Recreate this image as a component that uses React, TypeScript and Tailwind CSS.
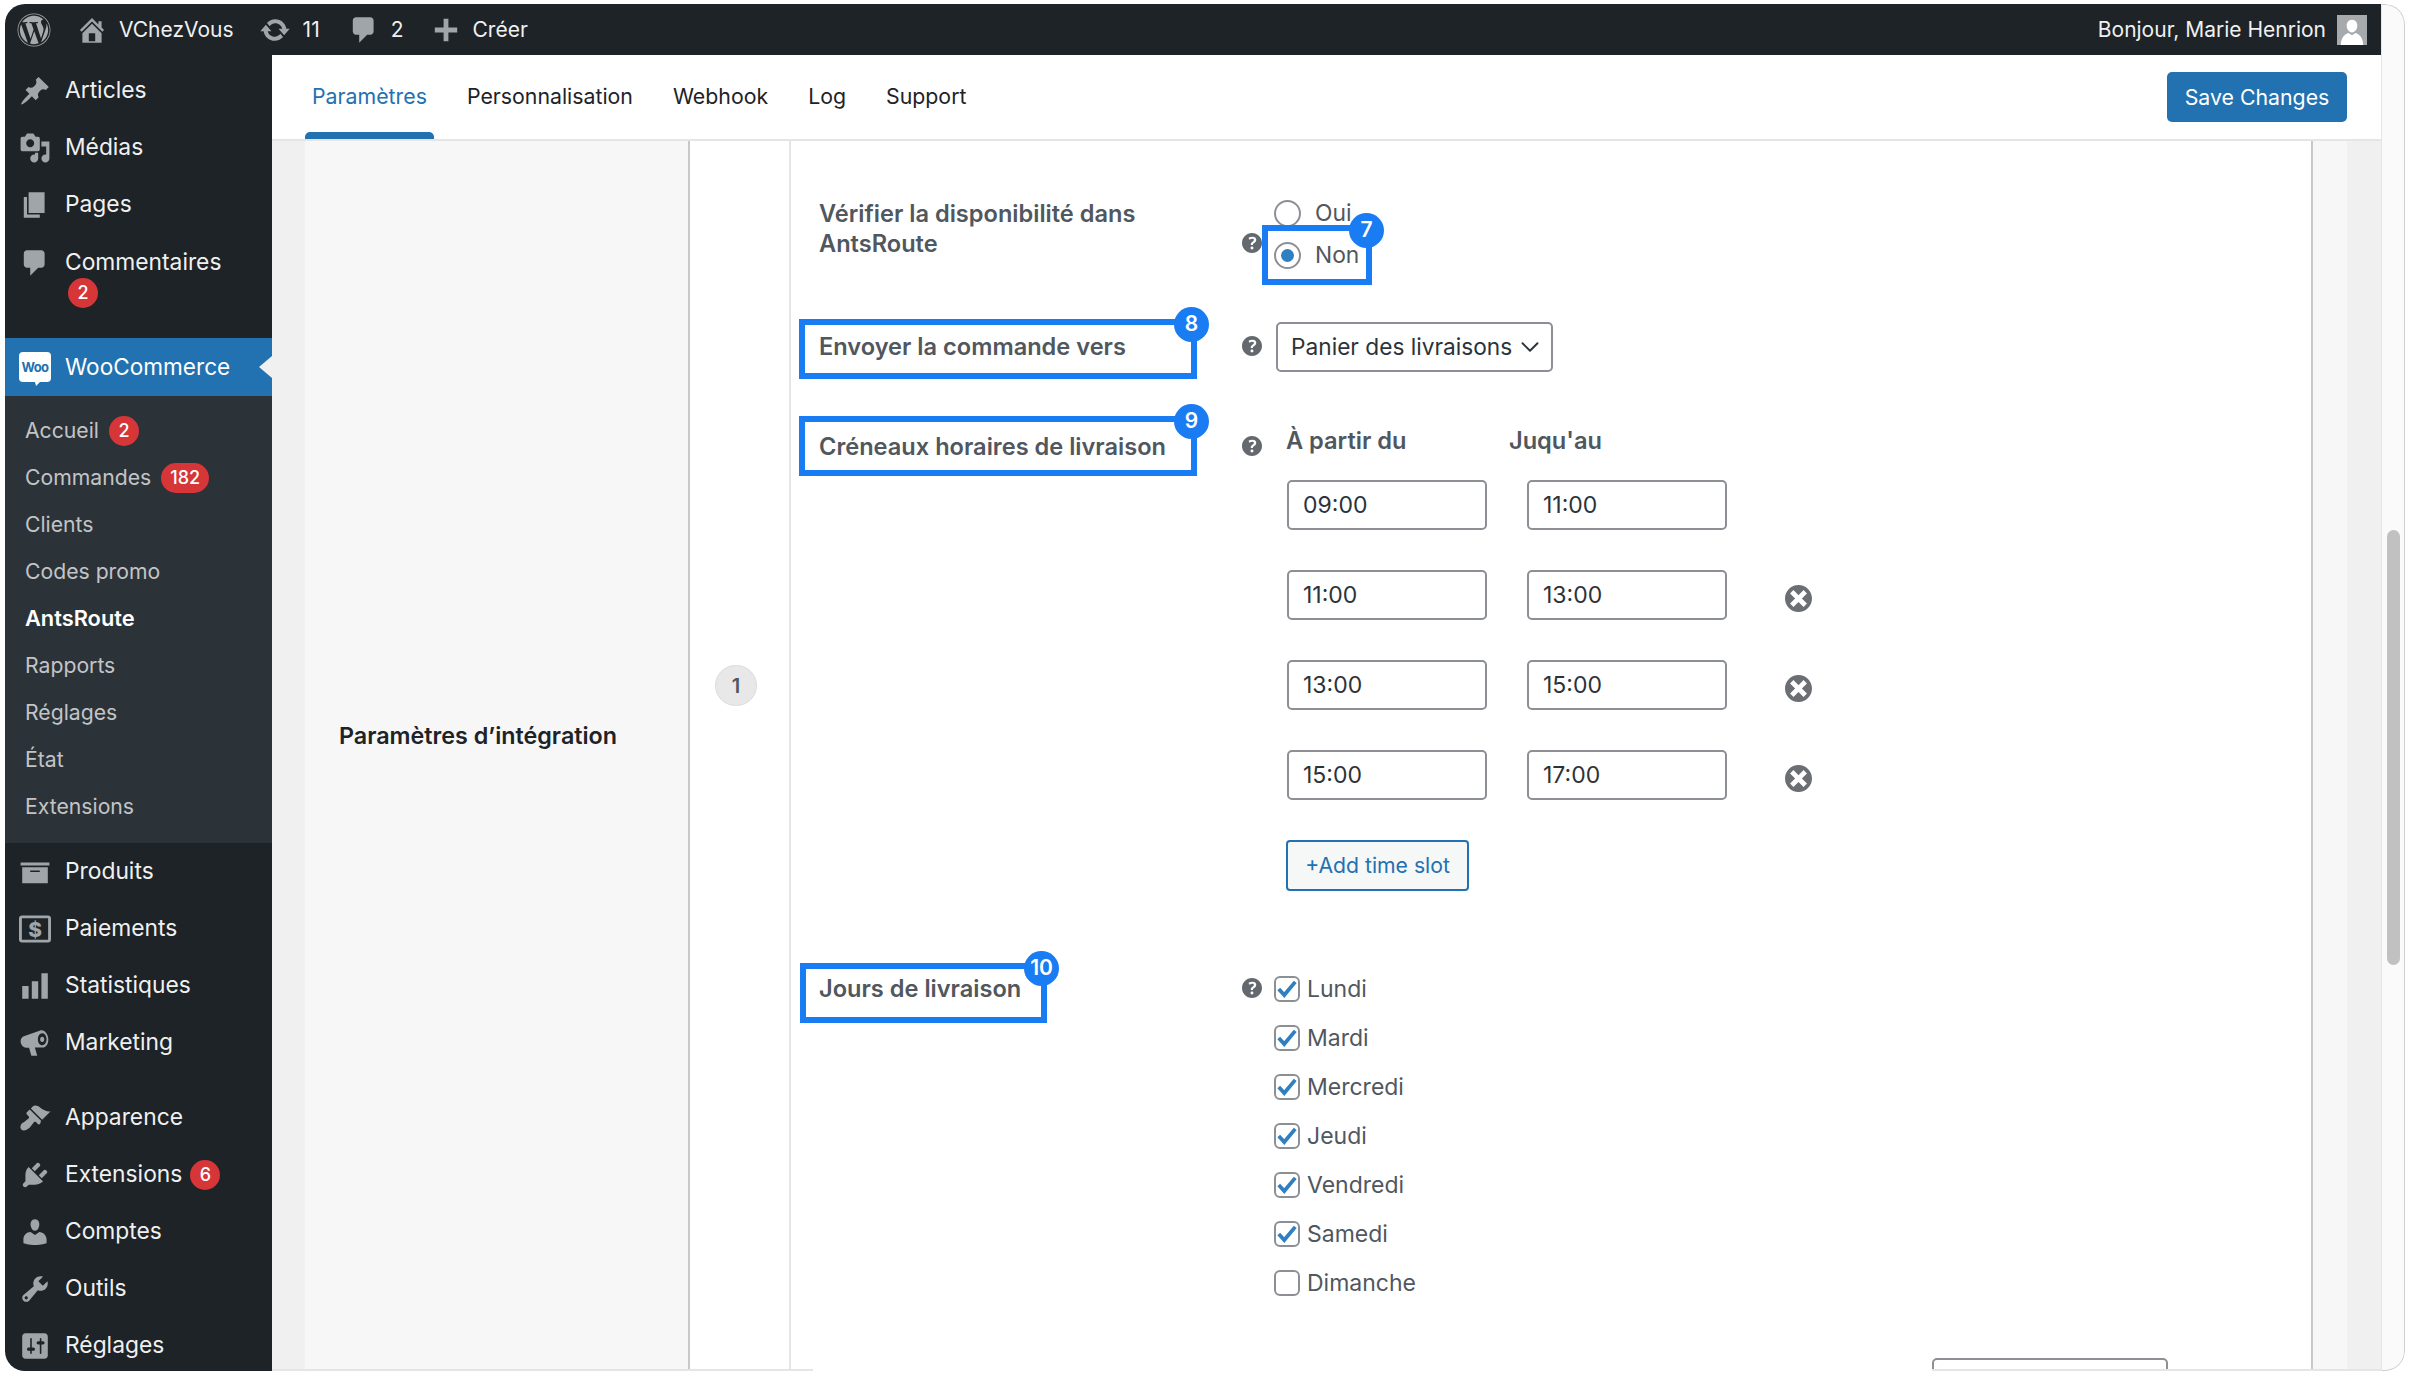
import { ChevronDown } from 'lucide-react'
import { FaWordpress } from 'react-icons/fa'
import type { ReactNode } from 'react'

// dashicons paths, 20x20 grid
const icons = {
  post: 'M10.44 3.02l1.82-1.82 6.36 6.35-1.83 1.82c-1.05-.68-2.48-.57-3.41.36l-.75.75c-.92.93-1.04 2.35-.35 3.41l-1.83 1.82-2.41-2.41-2.8 2.79c-.42.42-3.38 2.71-3.8 2.29s1.86-3.39 2.28-3.81l2.79-2.79L4.1 9.36l1.83-1.82c1.05.69 2.48.57 3.4-.36l.75-.75c.93-.92 1.05-2.35.36-3.41z',
  media: 'M13 11V4c0-.55-.45-1-1-1h-1.67L9 1H5L3.67 3H2c-.55 0-1 .45-1 1v7c0 .55.45 1 1 1h10c.55 0 1-.45 1-1zM7 4.5c1.38 0 2.5 1.12 2.5 2.5S8.38 9.5 7 9.5 4.5 8.38 4.5 7 5.62 4.5 7 4.5zM14 6h5v10.5c0 1.38-1.12 2.5-2.5 2.5S14 17.88 14 16.5s1.12-2.5 2.5-2.5c.17 0 .34.02.5.05V9h-3V6zm-4 8.05V13h2v3.5c0 1.38-1.12 2.5-2.5 2.5S7 17.88 7 16.5 8.12 14 9.5 14c.17 0 .34.02.5.05z',
  page: 'M6 15V2h10v13H6zm-1 1h8v2H3V5h2v11z',
  comments: 'M5 2h9c1.1 0 2 .9 2 2v7c0 1.1-.9 2-2 2h-2l-5 5v-5H5c-1.1 0-2-.9-2-2V4c0-1.1.9-2 2-2z',
  home: 'M16 8.5l1.53 1.53-1.06 1.06L10 4.62l-6.47 6.47-1.06-1.06L10 2.5l4 4v-2h2v4zm-6-2.46l6 5.99V18H4v-5.97zM12 17v-5H8v5h4z',
  update: 'M10.2 3.28c3.53 0 6.43 2.61 6.92 6h2.08l-3.5 4-3.5-4h2.32c-.45-1.97-2.21-3.45-4.32-3.45-1.45 0-2.73.71-3.54 1.78L4.95 5.66C6.23 4.2 8.11 3.28 10.2 3.28zm-.4 13.44c-3.52 0-6.43-2.61-6.92-6H.8l3.5-4c1.17 1.33 2.33 2.67 3.5 4H5.48c.45 1.97 2.21 3.45 4.32 3.45 1.45 0 2.73-.71 3.54-1.78l1.71 1.95c-1.28 1.46-3.15 2.38-5.25 2.38z',
  plus: 'M17 8.5v3h-5.5V17h-3v-5.5H3v-3h5.5V3h3v5.5H17z',
  archive: 'M19 4v2H1V4h18zM2 7h16v10H2V7zm11 3V9H7v1h6z',
  chart: 'M18 18V2h-4v16h4zm-6 0V7H8v11h4zm-6 0v-8H2v8h4z',
  megaphone: 'M13.2 2.2c2.4-.7 4.5 1.6 5 4.4.5 2.8-.4 5.6-2.8 6.2H9.9l1.5 5.2h-3.7L6.3 13H4.6C2.6 12.9 1 10.9 1 8.9c0-1.4.8-2.6 2-3.1l9.4-3.3c.3-.1.5-.2.8-.3zm1.3 1.7c-1.6 0-2.7 1.8-2.7 3.9s1.1 3.6 2.7 3.6 2.7-1.6 2.7-3.7-1.1-3.8-2.7-3.8zm0 2.2c.8 0 1.3.8 1.3 1.7s-.5 1.6-1.3 1.6-1.3-.7-1.3-1.6.5-1.7 1.3-1.7z',
  appearance: 'M14.48 11.06L7.41 3.99l1.5-1.5c.5-.56 2.3-.47 3.51.32 1.21.8 1.43 1.28 2.91 2.1 1.18.64 2.45 1.26 4.45.85zm-.71.71L6.7 4.7 4.93 6.47c-.39.39-.39 1.02 0 1.41l1.06 1.06c.39.39.39 1.03 0 1.42-.6.6-1.43 1.11-2.21 1.69-.35.26-.7.53-1.01.84C1.43 13.23.1 15.8 1.48 17.18c1.37 1.37 3.95.04 5.31-1.29.31-.31.58-.66.84-1.01.58-.78 1.09-1.61 1.69-2.21.39-.39 1.02-.39 1.41 0l1.06 1.06c.39.39 1.02.39 1.41 0z',
  plugins: 'M13.11 4.36L9.87 7.6 8 5.73l3.24-3.24c.35-.34 1.05-.2 1.56.32.52.51.66 1.21.31 1.55zm-8 1.77l.91-1.12 9.01 9.01-1.19.84c-.71.71-2.63 1.16-3.82 1.16H6.14L4.9 17.26c-.59.59-1.54.59-2.12 0-.59-.58-.59-1.53 0-2.12l1.24-1.24v-3.88c0-1.13.4-3.19 1.09-3.89zm7.26 3.97l3.24-3.24c.34-.35 1.04-.21 1.55.31.52.51.66 1.21.31 1.55l-3.24 3.25z',
  users: 'M10 9.25c-2.27 0-2.73-3.44-2.73-3.44C7 4.02 7.82 2 9.97 2c2.16 0 2.98 2.02 2.71 3.81 0 0-.41 3.44-2.68 3.44zm0 2.57L12.72 10c2.39 0 4.52 2.33 4.52 4.53v2.49s-3.65 1.13-7.24 1.13c-3.65 0-7.24-1.13-7.24-1.13v-2.49c0-2.25 1.94-4.48 4.47-4.48z',
  tools: 'M16.68 9.77c-1.34 1.34-3.3 1.67-4.95.99l-5.41 6.52c-.99.99-2.59.99-3.58 0s-.99-2.59 0-3.57l6.52-5.42c-.68-1.65-.35-3.61.99-4.95 1.28-1.28 3.12-1.62 4.72-1.06l-2.89 2.89 2.82 2.82 2.86-2.87c.53 1.58.18 3.39-1.08 4.65zM3.81 16.21c.4.39 1.04.39 1.43 0 .4-.4.4-1.04 0-1.43-.39-.4-1.03-.4-1.43 0-.39.39-.39 1.03 0 1.43z',
  settings: 'M18 16V4c0-1.1-.9-2-2-2H4c-1.1 0-2 .9-2 2v12c0 1.1.9 2 2 2h12c1.1 0 2-.9 2-2zM8 11h1c.55 0 1 .45 1 1s-.45 1-1 1H8v1.5c0 .28-.22.5-.5.5s-.5-.22-.5-.5V13H6c-.55 0-1-.45-1-1s.45-1 1-1h1V5.5c0-.28.22-.5.5-.5s.5.22.5.5V11zm5-2h-1c-.55 0-1-.45-1-1s.45-1 1-1h1V5.5c0-.28.22-.5.5-.5s.5.22.5.5V7h1c.55 0 1 .45 1 1s-.45 1-1 1h-1v5.5c0 .28-.22.5-.5.5s-.5-.22-.5-.5V9z',
  help: 'M17 10c0-3.87-3.14-7-7-7-3.87 0-7 3.13-7 7 0 3.86 3.13 7 7 7 3.86 0 7-3.14 7-7zm-6.3 1.48H9.14v-.43c0-.38.08-.7.24-.98s.46-.57.88-.89c.41-.29.68-.53.81-.71.14-.18.2-.39.2-.62 0-.25-.09-.44-.28-.58-.19-.13-.45-.19-.79-.19-.58 0-1.25.19-2 .57l-.64-1.28c.87-.49 1.8-.74 2.77-.74.81 0 1.45.2 1.92.58.48.39.71.91.71 1.55 0 .43-.09.8-.29 1.11-.19.32-.57.67-1.11 1.06-.38.28-.61.49-.71.63-.1.15-.15.34-.15.57v.35zm-1.47 2.74c-.18-.18-.27-.42-.27-.73 0-.33.08-.58.26-.75s.43-.25.77-.25c.32 0 .57.09.75.26s.27.42.27.74c0 .3-.09.55-.27.72-.18.18-.43.27-.75.27-.33 0-.58-.09-.76-.26z',
  dismiss: 'M10 2c4.42 0 8 3.58 8 8s-3.58 8-8 8-8-3.58-8-8 3.58-8 8-8zm5 11l-3-3 3-3-2-2-3 3-3-3-2 2 3 3-3 3 2 2 3-3 3 3z',
}

function Dash({ d, className = 'size-8 fill-[#a0a5aa]' }: { d: string; className?: string }) {
  return (
    <svg viewBox="0 0 20 20" className={className} aria-hidden="true">
      <path d={d} />
    </svg>
  )
}

function PayIcon() {
  return (
    <svg viewBox="0 0 20 20" className="size-8" aria-hidden="true">
      <rect x="0.9" y="2.4" width="18.2" height="15.2" rx="1" fill="none" stroke="#a0a5aa" strokeWidth="1.8" />
      <text x="10" y="14.8" textAnchor="middle" fontSize="13" fontWeight="800" fill="#a0a5aa" fontFamily="Inter, sans-serif">
        $
      </text>
    </svg>
  )
}

function WooIcon() {
  return (
    <svg viewBox="0 0 32 34" className="h-[34px] w-8" aria-hidden="true">
      <path d="M4 0h24a4 4 0 0 1 4 4v22a4 4 0 0 1-4 4H21l-4 4-1-4H4a4 4 0 0 1-4-4V4a4 4 0 0 1 4-4z" fill="#fff" />
      <text x="16" y="20" textAnchor="middle" fontSize="13" fontWeight="700" letterSpacing="-0.6" fill="#2271b1" fontFamily="Inter, sans-serif">
        Woo
      </text>
    </svg>
  )
}

function Count({ children, wide }: { children: ReactNode; wide?: boolean }) {
  return (
    <span className={`flex h-[30px] items-center justify-center rounded-full bg-[#d63638] text-[18px] font-medium text-white ${wide ? 'w-[48px]' : 'w-[30px]'}`}>
      {children}
    </span>
  )
}

function MenuItem({ icon, label, badge }: { icon: ReactNode; label: string; badge?: string }) {
  return (
    <div className="flex h-[57px] items-center text-[22.8px] text-[#f0f0f1]">
      <span className="flex w-[60px] justify-center">{icon}</span>
      <span>{label}</span>
      {badge && (
        <span className="ml-[8px]">
          <Count>{badge}</Count>
        </span>
      )}
    </div>
  )
}

function SubItem({ label, badge, wide, active }: { label: string; badge?: string; wide?: boolean; active?: boolean }) {
  return (
    <div className={`flex h-[47px] items-center gap-[10px] pl-[20px] ${active ? 'text-[21.8px] font-semibold text-white' : 'text-[21.2px] text-[#c3c4c7]'}`}>
      <span>{label}</span>
      {badge && <Count wide={wide}>{badge}</Count>}
    </div>
  )
}

function Sidebar() {
  return (
    <aside className="w-[267px] shrink-0 overflow-hidden bg-[#1d2327] pt-[7px]">
      <MenuItem icon={<Dash d={icons.post} />} label="Articles" />
      <MenuItem icon={<Dash d={icons.media} />} label="Médias" />
      <MenuItem icon={<Dash d={icons.page} />} label="Pages" />
      <div className="flex h-[105px] items-start pt-[14px] text-[22.8px] text-[#f0f0f1]">
        <span className="flex w-[60px] justify-center">
          <Dash d={icons.comments} />
        </span>
        <div className="leading-[30px]">
          <div>Commentaires</div>
          <div className="mt-px ml-[3px]">
            <Count>2</Count>
          </div>
        </div>
      </div>
      <div className="relative flex h-[58px] items-center bg-[#2271b1] text-[22.6px] text-white">
        <span className="flex w-[60px] justify-center pt-[3px]">
          <WooIcon />
        </span>
        <span>WooCommerce</span>
        <span className="absolute top-[18px] right-0 size-0 border-y-[11px] border-r-[13px] border-y-transparent border-r-[#f0f0f1]" />
      </div>
      <div className="bg-[#2c3338] pt-[11px] pb-[13px]">
        <SubItem label="Accueil" badge="2" />
        <SubItem label="Commandes" badge="182" wide />
        <SubItem label="Clients" />
        <SubItem label="Codes promo" />
        <SubItem label="AntsRoute" active />
        <SubItem label="Rapports" />
        <SubItem label="Réglages" />
        <SubItem label="État" />
        <SubItem label="Extensions" />
      </div>
      <MenuItem icon={<Dash d={icons.archive} />} label="Produits" />
      <MenuItem icon={<PayIcon />} label="Paiements" />
      <MenuItem icon={<Dash d={icons.chart} />} label="Statistiques" />
      <MenuItem icon={<Dash d={icons.megaphone} />} label="Marketing" />
      <div className="h-[18px]" />
      <MenuItem icon={<Dash d={icons.appearance} />} label="Apparence" />
      <MenuItem icon={<Dash d={icons.plugins} />} label="Extensions" badge="6" />
      <MenuItem icon={<Dash d={icons.users} />} label="Comptes" />
      <MenuItem icon={<Dash d={icons.tools} />} label="Outils" />
      <MenuItem icon={<Dash d={icons.settings} />} label="Réglages" />
    </aside>
  )
}

function AdminBar() {
  return (
    <header className="flex h-[51px] shrink-0 items-center bg-[#1d2327] pr-[14px] pl-[12px] text-[21px] text-[#f0f0f1]">
      <FaWordpress className="size-[34px] text-[#a7aaad]" />
      <span className="ml-[25px]">
        <Dash d={icons.home} />
      </span>
      <span className="ml-[11px]">VChezVous</span>
      <span className="ml-[25px]">
        <Dash d={icons.update} />
      </span>
      <span className="ml-[12px]">11</span>
      <span className="ml-[28px]">
        <Dash d={icons.comments} />
      </span>
      <span className="ml-[11px]">2</span>
      <span className="ml-[26px]">
        <Dash d={icons.plus} />
      </span>
      <span className="ml-[11px]">Créer</span>
      <span className="ml-auto">Bonjour, Marie Henrion</span>
      <span className="ml-[11px] flex h-[30px] w-[30px] items-end justify-center overflow-hidden bg-[#a7aaad]">
        <svg viewBox="0 0 20 20" className="size-[28px] fill-white" aria-hidden="true">
          <path d="M10 2c2.5 0 3.8 2 3.8 4.3S12.3 11 10 11 6.2 8.600 6.200 6.300 7.500 2 10 2zM2 20c0-5 3-8 5.500-8.500L10 13l2.500-1.500C15 12 18 15 18 20z" />
        </svg>
      </span>
    </header>
  )
}

function Tabs() {
  const tabs = ['Paramètres', 'Personnalisation', 'Webhook', 'Log', 'Support']
  return (
    <nav className="flex h-[86px] shrink-0 items-center justify-between border-b-2 border-[#e5e5e5] bg-white pr-[34px] pl-[33px] text-[21.3px]">
      <div className="flex h-full gap-[26px]">
        {tabs.map((tab, index) => (
          <div key={tab} className={`relative flex h-full items-center px-[7px] ${index === 0 ? 'text-[#2271b1]' : 'text-[#1d2327]'}`}>
            {tab}
            {index === 0 && <span className="absolute right-0 bottom-0 left-0 h-[7px] rounded-t-[5px] bg-[#2271b1]" />}
          </div>
        ))}
      </div>
      <button type="button" className="h-[50px] w-[180px] rounded-[5px] bg-[#2271b1] pt-[2px] text-[21.3px] text-white">
        Save Changes
      </button>
    </nav>
  )
}

function Callout({ n, className }: { n: number; className: string }) {
  return (
    <div className={`absolute h-[60px] border-[6px] border-[#1a7cf2] ${className}`}>
      <span className="absolute -top-[18.5px] -right-[18px] flex h-[35px] w-[35px] items-center justify-center rounded-full bg-[#1a7cf2] text-[21px] font-semibold text-white">
        {n}
      </span>
    </div>
  )
}

function Label({ children, className = '' }: { children: ReactNode; className?: string }) {
  return <div className={`relative text-[23.6px] leading-[30px] font-semibold text-[#50575e] ${className}`}>{children}</div>
}

function Help({ className }: { className: string }) {
  return (
    <svg viewBox="3 3 14 14" className={`size-[20px] fill-[#646970] ${className}`} aria-hidden="true">
      <path d={icons.help} />
    </svg>
  )
}

function Radio({ label, checked }: { label: string; checked?: boolean }) {
  return (
    <div className="relative flex h-[28px] items-center text-[22.8px] text-[#50575e]">
      <span className="flex size-[27px] items-center justify-center rounded-full border-2 border-[#8c8f94] bg-white">
        {checked && <span className="size-[13px] rounded-full bg-[#2f7fc1]" />}
      </span>
      <span className="ml-[14px]">{label}</span>
      {checked && <Callout n={7} className="-top-[16px] -left-[12px] w-[110px]" />}
    </div>
  )
}

function TimeInput({ value }: { value: string }) {
  return (
    <div className="flex h-[50px] w-[200px] items-center rounded-[5px] border-2 border-[#8c8f94] bg-white pl-[14px] text-[23px] text-[#2c3338]">
      {value}
    </div>
  )
}

function Day({ label, checked }: { label: string; checked: boolean }) {
  return (
    <div className="flex h-[26px] items-center text-[23px] text-[#50575e]">
      <span className="flex size-[26px] items-center justify-center rounded-[6px] border-2 border-[#8c8f94] bg-white">
        {checked && (
          <svg viewBox="0 0 20 20" className="size-[22px] shrink-0" aria-hidden="true">
            <path d="M2.500 10 7.500 15.500 17.500 3.500" fill="none" stroke="#2f7fc1" strokeWidth="3.4" />
          </svg>
        )}
      </span>
      <span className="ml-[7px]">{label}</span>
    </div>
  )
}

const slots = [
  ['09:00', '11:00'],
  ['11:00', '13:00'],
  ['13:00', '15:00'],
  ['15:00', '17:00'],
]

const days = ['Lundi', 'Mardi', 'Mercredi', 'Jeudi', 'Vendredi', 'Samedi', 'Dimanche']

function Settings() {
  return (
    <div className="grid min-h-0 flex-1 grid-cols-[423px_32px_1fr] content-start overflow-hidden pt-[58px] pl-[28px]">
      <Label>
        Vérifier la disponibilité dans
        <br />
        AntsRoute
      </Label>
      <Help className="mt-[34px]" />
      <div className="flex flex-col gap-[14px]">
        <Radio label="Oui" />
        <Radio label="Non" checked />
      </div>

      <Label className="mt-[63px]">
        <span className="whitespace-nowrap">Envoyer la commande vers</span>
        <Callout n={8} className="-top-[13px] -left-[20px] w-[398px]" />
      </Label>
      <Help className="mt-[67px]" />
      <div className="mt-[53px] ml-[2px] flex h-[50px] w-[277px] items-center justify-between rounded-[5px] border-2 border-[#8c8f94] bg-white pr-[6px] pl-[13px] text-[22.7px] text-[#2c3338]">
        Panier des livraisons
        <ChevronDown className="size-[30px] shrink-0" strokeWidth={1.5} />
      </div>

      <Label className="mt-[60px]">
        <span className="whitespace-nowrap">Créneaux horaires de livraison</span>
        <Callout n={9} className="-top-[16px] -left-[20px] w-[398px]" />
      </Label>
      <Help className="mt-[64px]" />
      <div className="mt-[54px]">
        <div className="ml-[12px] flex text-[23.6px] leading-[30px] font-semibold text-[#50575e]">
          <span className="w-[223px]">À partir du</span>
          <span>Juqu'au</span>
        </div>
        <div className="mt-[24px] ml-[13px] flex flex-col gap-[40px]">
          {slots.map(([from, to], index) => (
            <div key={from} className="flex items-start gap-[40px]">
              <TimeInput value={from} />
              <TimeInput value={to} />
              {index > 0 && (
                <svg viewBox="2 2 16 16" className="mt-[15px] ml-[18px] size-[27px] fill-[#6b6f73]" aria-hidden="true">
                  <path d={icons.dismiss} />
                </svg>
              )}
            </div>
          ))}
        </div>
        <button type="button" className="mt-[40px] ml-[12px] h-[51px] w-[183px] rounded-[4px] border-2 border-[#2271b1] bg-[#f6f7f7] text-[21.2px] text-[#2271b1]">
          +Add time slot
        </button>
      </div>

      <Label className="mt-[83px]">
        <span className="whitespace-nowrap">Jours de livraison</span>
        <Callout n={10} className="-top-[11px] -left-[19px] w-[247px]" />
      </Label>
      <Help className="mt-[87px]" />
      <div className="mt-[85px]">
        <div className="flex flex-col gap-[23px]">
          {days.map((day) => (
            <Day key={day} label={day} checked={day !== 'Dimanche'} />
          ))}
        </div>
        <div className="mt-[62px] ml-[658px] h-[49px] w-[236px] rounded-[5px] border-2 border-[#8c8f94] bg-white" />
      </div>
    </div>
  )
}

function Content() {
  return (
    <div className="flex min-h-0 flex-1 bg-[#f0f0f1] pr-[34px] pl-[33px]">
      <div className="flex w-[385px] shrink-0 border-r-2 border-[#c8c8c8] bg-[#f7f7f7] pt-[580px] pl-[34px]">
        <div className="text-[23.3px] leading-[30px] font-semibold whitespace-nowrap text-[#1d2327]">Paramètres d’intégration</div>
      </div>
      <div className="w-[101px] shrink-0 border-r-2 border-[#e5e5e5] bg-white pt-[524px] pl-[25px]">
        <div className="flex h-[41px] w-[42px] items-center justify-center rounded-full border border-[#dcdcde] bg-[#e8e8e8] text-[20px] font-semibold text-[#50575e]">
          1
        </div>
      </div>
      <div className="flex min-w-0 flex-1 flex-col border-r-2 border-[#c8c8c8] bg-white">
        <Settings />
      </div>
      <div className="w-[34px] shrink-0 bg-[#f7f7f7]" />
    </div>
  )
}

export default function App() {
  return (
    <div className="h-[1374px] w-[2409px] bg-white pt-[4px] pl-[5px] font-[family-name:Inter,sans-serif]">
      <div className="flex h-[1367px] w-[2400px] overflow-hidden rounded-[20px]">
        <div className="flex w-[2376px] shrink-0 flex-col">
          <AdminBar />
          <div className="flex min-h-0 flex-1">
            <Sidebar />
            <main className="flex min-w-0 flex-1 flex-col">
              <Tabs />
              <Content />
              <div className="flex h-[2px] shrink-0 bg-[#e5e5e5]">
                <div className="ml-[541px] h-full w-[1119px] bg-white" />
              </div>
            </main>
          </div>
        </div>
        <div className="flex-1 rounded-r-[20px] border border-l-[#e5e5e5] border-[#cfcfcf] bg-[#fafafa] pt-[525px] pl-[5px]">
          <div className="h-[435px] w-[13px] rounded-full bg-[#c1c1c1]" />
        </div>
      </div>
    </div>
  )
}
